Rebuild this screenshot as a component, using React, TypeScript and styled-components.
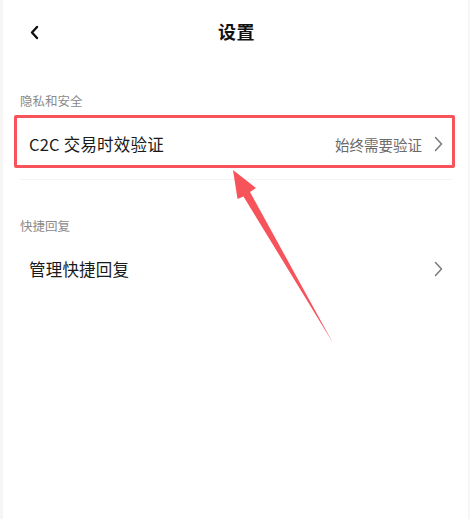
import * as React from 'react'
import styled, { createGlobalStyle } from 'styled-components'

const GlobalStyle = createGlobalStyle`
    html, body {
        margin: 0;
        padding: 0;
        background: #f6f6f6;
    }
    body {
        font-family: "Noto Sans CJK SC", "Noto Sans", sans-serif;
        -webkit-font-smoothing: antialiased;
    }
`

const annotationRed = '#f6535a'

const Screen = styled.div`
    position: relative;
    width: 470px;
    height: 519px;
    padding: 0 2px 0 3px;
    box-sizing: border-box;
    overflow: hidden;
`

const Page = styled.div`
    height: 100%;
    background: #ffffff;
    display: flex;
    flex-direction: column;
`

const NavBar = styled.div`
    position: relative;
    height: 62px;
    display: flex;
    align-items: center;
    justify-content: center;
`

const BackButton = styled.div`
    position: absolute;
    left: 24px;
    top: 24px;
    width: 16px;
    height: 16px;
    display: flex;
    align-items: center;
    justify-content: center;
`

const Title = styled.div`
    font-size: 18px;
    font-weight: 700;
    color: #111111;
    letter-spacing: 0.5px;
    margin-left: 2px;
`

const SectionLabel = styled.div<{ $top: number }>`
    margin-top: ${(p) => p.$top}px;
    padding-left: 17px;
    height: 16px;
    line-height: 16px;
    font-size: 12.5px;
    color: #8a8a8a;
`

const Row = styled.div<{ $highlighted?: boolean }>`
    position: relative;
    height: 70px;
    margin: 0 16px 0 17px;
    padding: 0 9px;
    display: flex;
    align-items: center;
    border-bottom: 1px solid ${(p) => (p.$highlighted ? '#f4f4f4' : 'transparent')};

    &::after {
        content: '';
        display: ${(p) => (p.$highlighted ? 'block' : 'none')};
        position: absolute;
        left: -6px;
        right: -3px;
        top: 6px;
        bottom: 11px;
        border: 3.5px solid ${annotationRed};
        border-radius: 2px;
        pointer-events: none;
    }
`

const RowTitle = styled.div`
    flex: 1;
    font-size: 16.5px;
    color: #1a1a1a;
    letter-spacing: 0.2px;
`

const RowValue = styled.div`
    font-size: 14.5px;
    color: #6b6b6b;
    margin-right: 12px;
`

const Chevron = styled.svg`
    width: 9px;
    height: 16px;
    flex-shrink: 0;
`

const ArrowLayer = styled.svg`
    position: absolute;
    left: 0;
    top: 0;
    width: 470px;
    height: 519px;
    pointer-events: none;
`

const RightChevron = () => (
    <Chevron viewBox="0 0 9 16">
        <polyline points="1.5,1.5 7.5,8 1.5,14.5" fill="none" stroke="#7a7a7a" strokeWidth="1.5" strokeLinecap="round" strokeLinejoin="round" />
    </Chevron>
)

export default function App() {
    return (
        <>
            <GlobalStyle />
            <Screen>
                <Page>
                    <NavBar>
                        <BackButton>
                            <svg width="16" height="16" viewBox="0 0 16 16">
                                <polyline points="10,3 5,8.5 10,14" fill="none" stroke="#111" strokeWidth="2.4" strokeLinecap="round" strokeLinejoin="round" />
                            </svg>
                        </BackButton>
                        <Title>设置</Title>
                    </NavBar>

                    <SectionLabel $top={31}>隐私和安全</SectionLabel>
                    <Row $highlighted>
                        <RowTitle>C2C 交易时效验证</RowTitle>
                        <RowValue>始终需要验证</RowValue>
                        <RightChevron />
                    </Row>

                    <SectionLabel $top={38}>快捷回复</SectionLabel>
                    <Row>
                        <RowTitle>管理快捷回复</RowTitle>
                        <RightChevron />
                    </Row>
                </Page>

                {/* annotation arrow pointing at the highlighted row */}
                <ArrowLayer viewBox="0 0 470 519">
                    <polygon
                        points="233,170 256,188 250,192 333,343 243.5,196.5 237.5,199"
                        fill={annotationRed}
                    />
                </ArrowLayer>
            </Screen>
        </>
    )
}
